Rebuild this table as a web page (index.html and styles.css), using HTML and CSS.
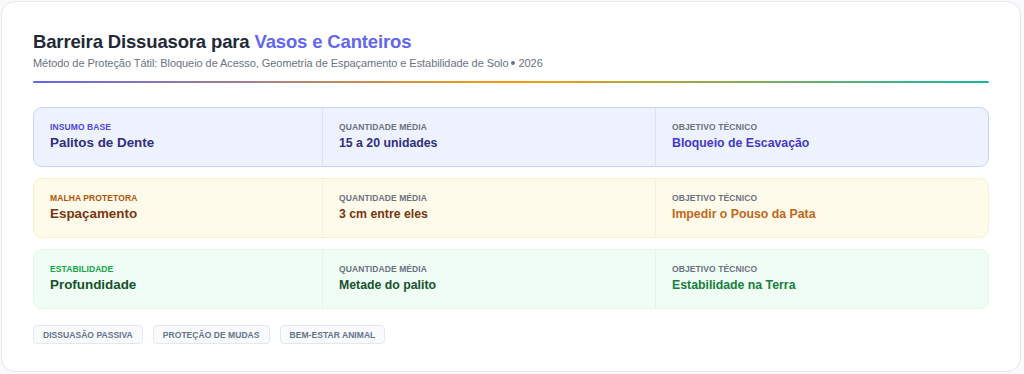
FILE: index.html
```html
<!DOCTYPE html>
<html lang="pt">
<head>
<meta charset="utf-8">
<link rel="stylesheet" href="styles.css">
</head>
<body>
<div class="card">
  <header class="head">
    <h1 class="title">Barreira Dissuasora para <span class="accent">Vasos e Canteiros</span></h1>
    <p class="subtitle">Método de Proteção Tátil: Bloqueio de Acesso, Geometria de Espaçamento e Estabilidade de Solo <span class="dot"></span> 2026</p>
  </header>
  <div class="rule"></div>
  <div class="rows">
    <div class="row indigo">
      <div class="cell"><div class="label">Insumo Base</div><div class="value main">Palitos de Dente</div></div>
      <div class="cell"><div class="label muted">Quantidade Média</div><div class="value">15 a 20 unidades</div></div>
      <div class="cell"><div class="label muted">Objetivo Técnico</div><div class="value strong">Bloqueio de Escavação</div></div>
    </div>
    <div class="row amber">
      <div class="cell"><div class="label">Malha Protetora</div><div class="value main">Espaçamento</div></div>
      <div class="cell"><div class="label muted">Quantidade Média</div><div class="value">3 cm entre eles</div></div>
      <div class="cell"><div class="label muted">Objetivo Técnico</div><div class="value strong">Impedir o Pouso da Pata</div></div>
    </div>
    <div class="row green">
      <div class="cell"><div class="label">Estabilidade</div><div class="value main">Profundidade</div></div>
      <div class="cell"><div class="label muted">Quantidade Média</div><div class="value">Metade do palito</div></div>
      <div class="cell"><div class="label muted">Objetivo Técnico</div><div class="value strong">Estabilidade na Terra</div></div>
    </div>
  </div>
  <div class="tags">
    <span class="tag">Dissuasão Passiva</span>
    <span class="tag">Proteção de Mudas</span>
    <span class="tag">Bem-Estar Animal</span>
  </div>
</div>
</body>
</html>
```

FILE: styles.css
```css
* { box-sizing: border-box; }
html, body { margin: 0; padding: 0; background: #f9fafb; }
body {
  font-family: "Liberation Sans", Arial, Helvetica, sans-serif;
  width: 1024px;
  height: 374px;
  padding: 1px 3px 2px 1px;
}
.card {
  background: #ffffff;
  border: 1px solid #e5e7eb;
  border-radius: 14px;
  height: 371px;
  padding: 29px 31px 0 31px;
}
.title {
  margin: 0;
  font-size: 18.5px;
  line-height: 22px;
  font-weight: 700;
  color: #1f2937;
  letter-spacing: -0.15px;
}
.accent { color: #6366f1; }
.subtitle {
  margin: 4px 0 0;
  font-size: 11px;
  line-height: 13px;
  color: #6b7280;
  letter-spacing: -0.06px;
}
.dot {
  display: inline-block;
  width: 4px;
  height: 4px;
  border-radius: 50%;
  background: #6b7280;
  vertical-align: middle;
  margin: 0 0 2px;
}
.rule {
  margin-top: 11px;
  height: 2px;
  background: linear-gradient(90deg, #6366f1 0%, #f59e0b 50%, #14b8a6 100%);
  border-radius: 1px;
}
.rows {
  margin-top: 24px;
  display: flex;
  flex-direction: column;
  gap: 11px;
}
.row {
  display: grid;
  grid-template-columns: 288px 1fr 1fr;
  height: 60px;
  border: 1px solid;
  border-radius: 9px;
  overflow: hidden;
}
.cell {
  padding: 14px 16px 0;
}
.cell + .cell { border-left: 1px solid; }
.label {
  font-size: 8.5px;
  line-height: 10px;
  font-weight: 700;
  text-transform: uppercase;
  letter-spacing: 0.1px;
}
.value {
  margin-top: 3px;
  font-size: 12.3px;
  line-height: 16px;
  font-weight: 700;
}
.value.main { font-size: 13.4px; }
.indigo { background: #eef2ff; border-color: #c7d2fe; }
.indigo .cell + .cell { border-color: #dbe1fb; }
.indigo .label { color: #4f46e5; }
.indigo .value { color: #312e81; }
.indigo .value.strong { color: #4338ca; }
.amber { background: #fffbeb; border-color: #fdf0c4; }
.amber .cell + .cell { border-color: #f8efd6; }
.amber .label { color: #b45309; }
.amber .value { color: #78350f; }
.amber .value.strong { color: #c2661a; }
.green { background: #f0fdf4; border-color: #dcfce7; }
.green .cell + .cell { border-color: #e3f5e9; }
.green .label { color: #16a34a; }
.green .value { color: #14532d; }
.green .value.strong { color: #15803d; }
.row .label.muted { color: #6b7280; }
.tags {
  margin-top: 16px;
  display: flex;
  gap: 10px;
}
.tag {
  display: block;
  background: #f8fafc;
  border: 1px solid #e2e8f0;
  border-radius: 4px;
  padding: 4px 9px 3px;
  font-size: 8.5px;
  line-height: 10px;
  font-weight: 700;
  color: #64748b;
  text-transform: uppercase;
  letter-spacing: 0.05px;
}
```
